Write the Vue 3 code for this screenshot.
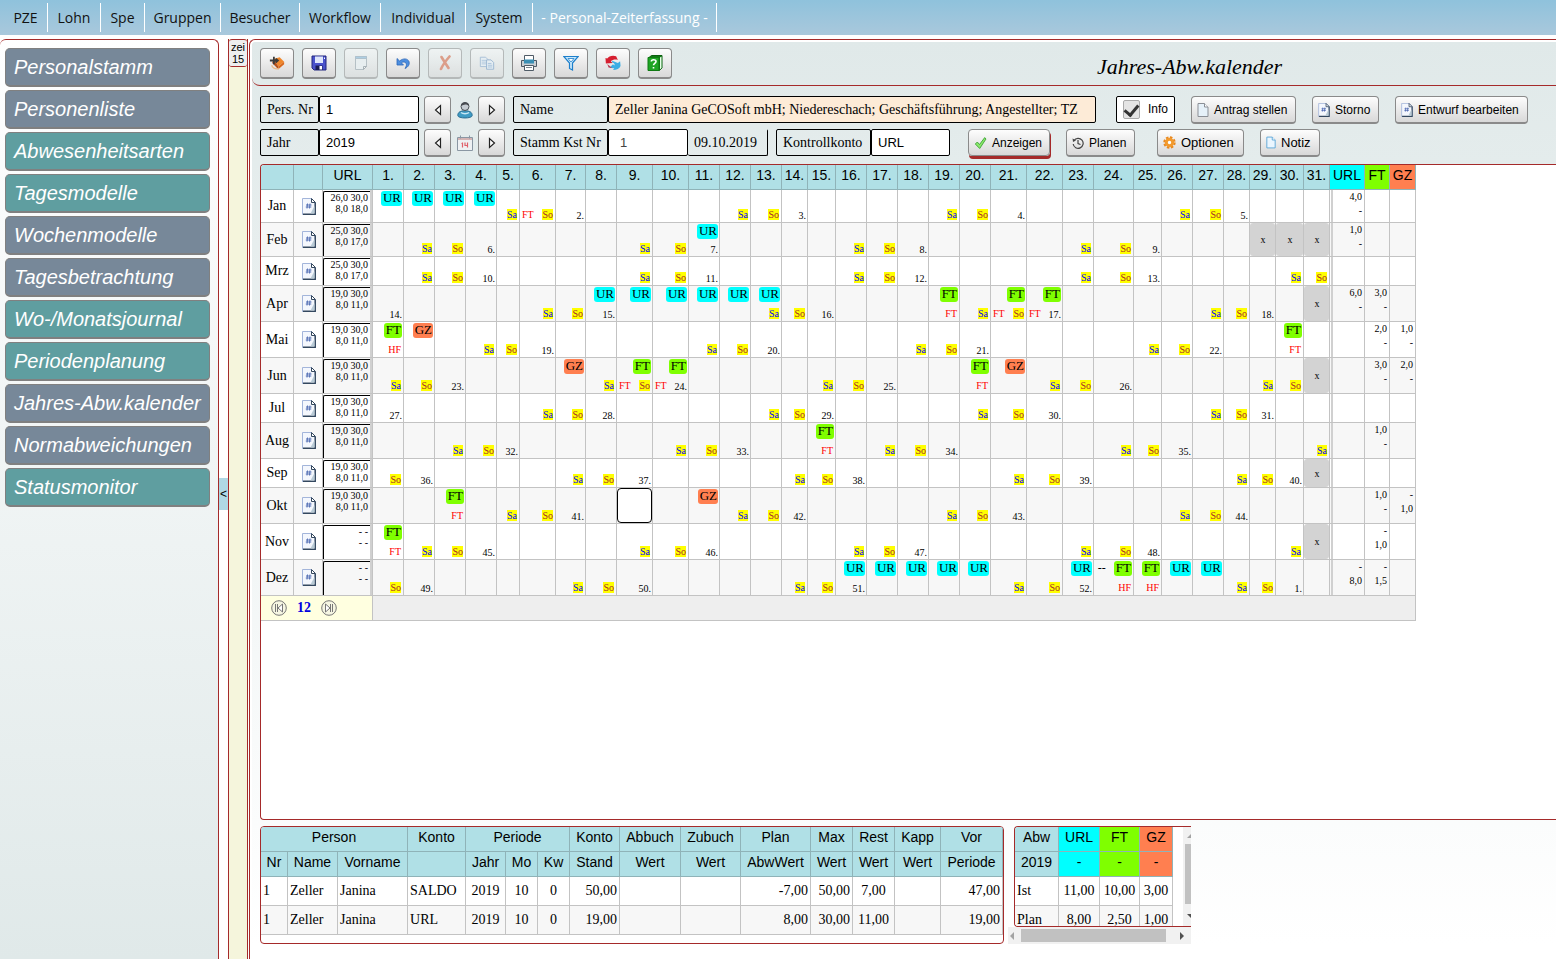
<script setup>
import { ref } from 'vue'

const navItems = ['PZE', 'Lohn', 'Spe', 'Gruppen', 'Besucher', 'Workflow', 'Individual', 'System', '- Personal-Zeiterfassung -']

const sideItems = [
  { label: 'Personalstamm', tone: 'slate' },
  { label: 'Personenliste', tone: 'slate' },
  { label: 'Abwesenheitsarten', tone: 'teal' },
  { label: 'Tagesmodelle', tone: 'teal' },
  { label: 'Wochenmodelle', tone: 'slate' },
  { label: 'Tagesbetrachtung', tone: 'slate' },
  { label: 'Wo-/Monatsjournal', tone: 'teal' },
  { label: 'Periodenplanung', tone: 'teal' },
  { label: 'Jahres-Abw.kalender', tone: 'slate' },
  { label: 'Normabweichungen', tone: 'slate' },
  { label: 'Statusmonitor', tone: 'teal' }
]

const tools = [
  { icon: 'exit', label: 'Beenden' },
  { icon: 'save', label: 'Speichern' },
  { icon: 'new', label: 'Neu', off: true },
  { icon: 'undo', label: 'Rückgängig' },
  { icon: 'delete', label: 'Löschen', off: true },
  { icon: 'copy', label: 'Kopieren', off: true },
  { icon: 'print', label: 'Drucken' },
  { icon: 'filter', label: 'Filter' },
  { icon: 'refresh', label: 'Aktualisieren' },
  { icon: 'help', label: 'Hilfe' }
]

const persNr = ref('1')
const jahr = ref('2019')
const kst = ref('1')
const konto = ref('URL')
const info = ref(true)

const year = 2019
const colWidths = [33, 29, 50, 31, 31, 31, 31, 23, 36, 30, 31, 36, 36, 31, 31, 31, 26, 28, 31, 31, 31, 31, 31, 36, 36, 31, 40, 28, 31, 31, 26, 26, 28, 26, 35, 25, 26]

// b: absence badges per day, n: holiday notes per day, s: yearly sums
const monthData = [
  { name: 'Jan', h: 33, acc: ['26,0 30,0', '8,0 18,0'], b: { 1: 'UR', 2: 'UR', 3: 'UR', 4: 'UR' }, n: { 6: 'FT' }, s: [['4,0', '-'], [], []] },
  { name: 'Feb', h: 34, acc: ['25,0 30,0', '8,0 17,0'], b: { 11: 'UR' }, n: {}, s: [['1,0', '-'], [], []] },
  { name: 'Mrz', h: 29, acc: ['25,0 30,0', '8,0 17,0'], b: {}, n: {}, s: [[], [], []] },
  { name: 'Apr', h: 36, acc: ['19,0 30,0', '8,0 11,0'], b: { 8: 'UR', 9: 'UR', 10: 'UR', 11: 'UR', 12: 'UR', 13: 'UR', 19: 'FT', 21: 'FT', 22: 'FT' }, n: { 19: 'FT', 21: 'FT', 22: 'FT' }, s: [['6,0', '-'], ['3,0', '-'], []] },
  { name: 'Mai', h: 36, acc: ['19,0 30,0', '8,0 11,0'], b: { 1: 'FT', 2: 'GZ', 30: 'FT' }, n: { 1: 'HF', 30: 'FT' }, s: [[], ['2,0', '-'], ['1,0', '-']] },
  { name: 'Jun', h: 36, acc: ['19,0 30,0', '8,0 11,0'], b: { 7: 'GZ', 9: 'FT', 10: 'FT', 20: 'FT', 21: 'GZ' }, n: { 9: 'FT', 10: 'FT', 20: 'FT' }, s: [[], ['3,0', '-'], ['2,0', '-']] },
  { name: 'Jul', h: 29, acc: ['19,0 30,0', '8,0 11,0'], b: {}, n: {}, s: [[], [], []] },
  { name: 'Aug', h: 36, acc: ['19,0 30,0', '8,0 11,0'], b: { 15: 'FT' }, n: { 15: 'FT' }, s: [[], ['1,0', '-'], []] },
  { name: 'Sep', h: 29, acc: ['19,0 30,0', '8,0 11,0'], b: {}, n: {}, s: [[], [], []] },
  { name: 'Okt', h: 36, acc: ['19,0 30,0', '8,0 11,0'], b: { 3: 'FT', 11: 'GZ' }, n: { 3: 'FT' }, s: [[], ['1,0', '-'], ['-', '1,0']] },
  { name: 'Nov', h: 36, acc: ['- -', '- -'], b: { 1: 'FT' }, n: { 1: 'FT' }, s: [[], ['-', '1,0'], []] },
  { name: 'Dez', h: 36, acc: ['- -', '- -'], b: { 16: 'UR', 17: 'UR', 18: 'UR', 19: 'UR', 20: 'UR', 23: 'UR', 24: 'FT', 25: 'FT', 26: 'UR', 27: 'UR' }, n: { 24: 'HF', 25: 'HF' }, pre: { 24: '--' }, s: [['-', '8,0'], ['-', '1,5'], []] }
]

function isoWeek(date) {
  const d = new Date(Date.UTC(date.getFullYear(), date.getMonth(), date.getDate()))
  d.setUTCDate(d.getUTCDate() + 4 - (d.getUTCDay() || 7))
  const start = new Date(Date.UTC(d.getUTCFullYear(), 0, 1))
  return Math.ceil(((d - start) / 86400000 + 1) / 7)
}

const months = monthData.map((m, index) => {
  const length = new Date(year, index + 1, 0).getDate()
  const days = []
  for (let day = 1; day <= 31; day++) {
    if (day > length) {
      days.push({ day, out: true })
      continue
    }
    const date = new Date(year, index, day)
    const wd = date.getDay()
    days.push({
      day,
      badge: m.b[day],
      note: m.n[day],
      pre: m.pre?.[day],
      mark: wd === 6 ? 'Sa' : wd === 0 ? 'So' : '',
      week: wd === 1 ? isoWeek(date) + '.' : '',
      selected: index === 9 && day === 9
    })
  }
  return { ...m, days }
})

const kontoCols = [27, 50, 70, 58, 40, 32, 32, 50, 61, 60, 70, 42, 42, 46, 62]
const kontoHead = ['Nr', 'Name', 'Vorname', '', 'Jahr', 'Mo', 'Kw', 'Stand', 'Wert', 'Wert', 'AbwWert', 'Wert', 'Wert', 'Wert', 'Periode']
const kontoAlign = ['l', 'l', 'l', 'l', 'c', 'c', 'c', 'r', 'r', 'r', 'r', 'r', 'c', 'r', 'r']
const kontoRows = [
  ['1', 'Zeller', 'Janina', 'SALDO', '2019', '10', '0', '50,00', '', '', '-7,00', '50,00', '7,00', '', '47,00'],
  ['1', 'Zeller', 'Janina', 'URL', '2019', '10', '0', '19,00', '', '', '8,00', '30,00', '11,00', '', '19,00']
]
</script>

<template>
  <div class="page">
    <svg class="defs" aria-hidden="true">
      <symbol id="i-doc" viewBox="0 0 14 17">
        <path d="M.5 .5h9l4 4v12H.5z" fill="#f4f7fd" stroke="#a3b5da" />
        <path d="M1 16.200h12.200V5" fill="none" stroke="#34485f" stroke-width="1.500" />
        <path d="M9.500 .5v4h4z" fill="#fff" stroke="#34485f" />
        <path d="M8.500 15.500 12.500 8v7.500z" fill="#b9cbd6" />
        <path d="M5.500 5.500 5 10.500M8 5.500 7.500 10.500M4 7h5.500M3.800 9h5.500" stroke="#4a66b0" stroke-width=".9" fill="none" />
      </symbol>
      <symbol id="i-page" viewBox="0 0 12 14">
        <path d="M1 .5h6.500L11 4v9.500H1z" fill="#e6f1f9" stroke="#8b8f96" />
        <path d="M7.500 .5V4H11" fill="#fff" stroke="#8b8f96" />
      </symbol>
      <symbol id="i-exit" viewBox="0 0 18 18">
        <path d="M5 4.500 12 2.500l5 5-6.500 5.500z" fill="#f0872b" />
        <path d="M5 4.500 10.500 13v3L3.500 9z" fill="#b4501a" />
        <path d="M10.500 13 17 7.500v3L10.500 16z" fill="#d9681c" />
        <path d="M3 11.500c1 3 4 4.500 8 4" fill="none" stroke="#e8b98a" stroke-width="1.500" />
        <path d="M1 6.200h8M5.500 2v8.500M7.500 4 10 6.200 7.500 8.500" fill="none" stroke="#3b3b3b" stroke-width="2" />
      </symbol>
      <symbol id="i-save" viewBox="0 0 16 16">
        <path d="M1 1h14v14H3l-2-2z" fill="#4a52cc" stroke="#23277f" />
        <path d="M4 1.500h8V8H4z" fill="#dfe6fb" />
        <path d="M4.500 10.500h7V15h-7z" fill="#191c55" />
        <path d="M8.500 11h2.500v3.500H8.500z" fill="#fff" />
        <path d="M13 2.500h1v1.500h-1z" fill="#fff" />
      </symbol>
      <symbol id="i-new" viewBox="0 0 16 16">
        <path d="M2.500 1.500h11v10l-3 3h-8z" fill="#eef3f6" stroke="#8b98a2" />
        <path d="M2.500 1.500h11v2h-11z" fill="#7ab4dd" stroke="#7f9bb2" />
        <path d="M13.500 11.500h-3v3z" fill="#fff" stroke="#6e7a84" />
      </symbol>
      <symbol id="i-undo" viewBox="0 0 16 16">
        <path d="M2 3.500v6.500h6.500L6.300 7.800c1.800-1.300 3.800-1 4.700.3.900 1.600.4 3.400-1 5.400 3.400-1.500 4.900-4.300 4-6.900C12.600 3.300 8.300 3 4.600 6z" fill="#4d8fe0" stroke="#2b64b8" stroke-width=".8" />
      </symbol>
      <symbol id="i-delete" viewBox="0 0 16 16">
        <path d="M4.500 2c2 3.500 4.500 7 7 11M12.500 1.500C9 5.500 6 9.500 4 14" fill="none" stroke="#d8552c" stroke-width="2.600" stroke-linecap="round" />
      </symbol>
      <symbol id="i-copy" viewBox="0 0 18 16">
        <path d="M1.500 1.500h6l2.500 2.500v8H1.500z" fill="#eaf2fb" stroke="#6a93c4" />
        <path d="M3 5h5M3 7h5M3 9h5" stroke="#7da6d4" />
        <path d="M8.500 4.500h5l3 3v7.500h-8z" fill="#eaf2fb" stroke="#4f7fb8" />
        <path d="M10 8.500h4M10 10.500h5M10 12.500h5" stroke="#6b98cc" />
      </symbol>
      <symbol id="i-print" viewBox="0 0 16 16">
        <path d="M3.500 5V.5h9V5" fill="#fff" stroke="#4f5b66" />
        <path d="M.5 5.500h15v6H.5z" fill="#c9cfd4" stroke="#4f5b66" />
        <path d="M3 4.500h10v4H3z" fill="#3a8fb4" />
        <path d="M3.500 10.500h9v5h-9z" fill="#fff" stroke="#4f5b66" />
        <path d="M5 12.500h6" stroke="#7d8790" />
      </symbol>
      <symbol id="i-filter" viewBox="0 0 16 16">
        <path d="M.8 1.500h14.400L9.500 8v7l-3-1.500V8z" fill="#c9e8fb" stroke="#1d7fcb" stroke-width="1.200" />
        <path d="M5 3.500h6L8 7z" fill="#fff" stroke="#1d7fcb" stroke-width=".8" />
      </symbol>
      <symbol id="i-refresh" viewBox="0 0 18 18">
        <path d="M8 6.500 14.500 9l2.500-2 .5 5.500c-1 3-4.500 4.500-8.500 4.500l1.500-2.200-5.500-.5L9 10.500l1.500 1.300c1-.8 0-2.800-2.500-3.300z" fill="#3aaee4" />
        <path d="M14.500 5.500 12.500 1.500C8.500 0 4 1.500 2.500 4L.5 3.500 1 9.500l7.500-.5-2-2c2-1.800 5-2.300 8-1.500z" fill="#d61f30" />
        <path d="M2.500 10 8 14.500l-4-.5z" fill="#b93a54" />
      </symbol>
      <symbol id="i-help" viewBox="0 0 16 16">
        <path d="M2 2.500 4.500 .5h10.500V13l-2.500 2.500z" fill="#0e7a12" stroke="#0b5e0e" />
        <path d="M13 2.500 14.500 1.500V13L13 14.500z" fill="#e8ffe8" />
        <path d="M1 2.500h11v13H1z" fill="#1fa524" stroke="#0f7a13" />
        <path d="M4.300 6.500C4.300 4.300 9 4 9 6.500c0 2-2.500 1.800-2.500 3.800M6.500 12v1.600" fill="none" stroke="#fff" stroke-width="1.600" />
      </symbol>
    </svg>

    <nav class="topnav">
      <a v-for="(item, i) in navItems" :key="item" href="#" :class="{ current: i === 8 }">{{ item }}</a>
    </nav>

    <div class="body">
      <aside class="sidebar">
        <button v-for="item in sideItems" :key="item.label" type="button" :class="item.tone">{{ item.label }}</button>
      </aside>
      <div class="handle"><button type="button">&lt;</button></div>
      <div class="strip"><button type="button">zei<br>15</button></div>

      <main class="main">
        <header class="toolbar">
          <button v-for="t in tools" :key="t.icon" type="button" class="btn tool" :disabled="t.off" :aria-label="t.label">
            <svg width="16" height="16" aria-hidden="true"><use :href="'#i-' + t.icon" /></svg>
          </button>
          <h1>Jahres-Abw.kalender</h1>
        </header>

        <form class="filters" @submit.prevent>
          <div class="line">
            <label class="cap short" for="pers">Pers. Nr</label>
            <input id="pers" v-model="persNr" class="field w100" type="text">
            <div class="stepper">
              <button type="button" class="btn" aria-label="Vorherige Person"><svg width="8" height="12"><path d="M6.500 1.500v9L1.500 6z" fill="#fff" stroke="#222" stroke-width="1.200" /></svg></button>
              <svg width="16" height="18" viewBox="0 0 16 18">
                <path d="M.8 14.500C.8 11 3.500 9.800 8 9.800s7.200 1.200 7.200 4.700c0 3.300-14.400 3.300-14.400 0z" fill="#3f9cc4" stroke="#2b6f94" />
                <path d="M4 11.500c2 1.500 6 1.500 8 0" stroke="#c7e7f4" stroke-width="1.500" fill="none" />
                <circle cx="8" cy="5.500" r="4" fill="#c5ccd2" stroke="#4b5157" />
                <path d="M4 5c0-5 8-5 8 0-2-2-5-2-8 0z" fill="#474b50" />
              </svg>
              <button type="button" class="btn" aria-label="Nächste Person"><svg width="8" height="12"><path d="M1.500 1.500v9L6.500 6z" fill="#fff" stroke="#222" stroke-width="1.200" /></svg></button>
            </div>
            <span class="cap long">Name</span>
            <output class="person">Zeller Janina GeCOSoft mbH; Niedereschach; Geschäftsführung; Angestellter; TZ</output>
            <div class="actions first">
              <label class="check"><input v-model="info" type="checkbox"><span>Info</span></label>
              <button type="button" class="btn text w105"><svg width="12" height="14"><use href="#i-page" /></svg>Antrag stellen</button>
              <button type="button" class="btn text w67"><svg width="12" height="14"><use href="#i-doc" /></svg>Storno</button>
              <button type="button" class="btn text w133"><svg width="12" height="14"><use href="#i-doc" /></svg>Entwurf bearbeiten</button>
            </div>
          </div>
          <div class="line">
            <label class="cap short" for="jahr">Jahr</label>
            <input id="jahr" v-model="jahr" class="field w100" type="text">
            <div class="stepper">
              <button type="button" class="btn" aria-label="Vorheriges Jahr"><svg width="8" height="12"><path d="M6.500 1.500v9L1.500 6z" fill="#fff" stroke="#222" stroke-width="1.200" /></svg></button>
              <svg width="16" height="18" viewBox="0 0 16 18">
                <path d="M.5 3.500h15v13H.5z" fill="#eef1f3" stroke="#8a97a3" />
                <path d="M1 4h14v2H1z" fill="#d4b4b4" />
                <path d="M3.500 1.500v3M12.500 1.500v3" stroke="#8a97a3" />
                <path d="M5.500 8.500v5M4.500 9.500h1M8 8.500v3h3M10.500 8.500v5" fill="none" stroke="#e0606a" stroke-width="1.200" />
              </svg>
              <button type="button" class="btn" aria-label="Nächstes Jahr"><svg width="8" height="12"><path d="M1.500 1.500v9L6.500 6z" fill="#fff" stroke="#222" stroke-width="1.200" /></svg></button>
            </div>
            <label class="cap long" for="kst">Stamm Kst Nr</label>
            <input id="kst" v-model="kst" class="field w80 dim" type="text">
            <span class="date">09.10.2019</span>
            <label class="cap long konto" for="konto">Kontrollkonto</label>
            <input id="konto" v-model="konto" class="field w79" type="text">
            <div class="actions second">
              <button type="submit" class="btn text primary w82"><svg width="13" height="12" viewBox="0 0 12 12"><path d="M.8 7 2.800 5 5 7.500 10.200 .6 11.500 2 5.200 11.500z" fill="#8be86a" stroke="#2f9a2a" stroke-width=".8" /></svg>Anzeigen</button>
              <button type="button" class="btn text w69"><svg width="12" height="12"><path d="M2 3.500A5 5 0 1 1 1.200 7" fill="none" stroke="#444" stroke-width="1.200" /><path d="M.6 1.500 1 5l3-1.500z" fill="#444" /><path d="M6 3v3.500l2.500 1" fill="none" stroke="#444" stroke-width="1.200" /></svg>Planen</button>
              <button type="button" class="btn text big wide w87"><svg width="13" height="13" viewBox="0 0 13 13"><circle cx="6.500" cy="6.500" r="5" fill="none" stroke="#e8871e" stroke-width="2.400" stroke-dasharray="2.400 1.500" /><circle cx="6.500" cy="6.500" r="3.200" fill="#fff" stroke="#f29a2e" stroke-width="3" /></svg>Optionen</button>
              <button type="button" class="btn text big w60"><svg width="10" height="13" viewBox="0 0 12 14"><path d="M1 .5h6.500L11 4v9.500H1z" fill="#eaf6ff" stroke="#4e9fd4" /><path d="M7.500 .5V4H11" fill="#fff" stroke="#4e9fd4" /></svg>Notiz</button>
            </div>
          </div>
        </form>

        <section class="calendar">
          <table class="grid cal">
            <colgroup><col v-for="(w, i) in colWidths" :key="i" :style="{ width: w + 'px' }"></colgroup>
            <thead>
              <tr>
                <th></th>
                <th></th>
                <th>URL</th>
                <th v-for="d in 31" :key="d">{{ d }}.</th>
                <th class="bg-ur">URL</th>
                <th class="bg-ft">FT</th>
                <th class="bg-gz">GZ</th>
              </tr>
            </thead>
            <tbody>
              <tr v-for="m in months" :key="m.name" :style="{ '--row': m.h + 'px' }">
                <th scope="row" class="month">{{ m.name }}</th>
                <td class="doc"><svg width="14" height="17" role="img" aria-label="Details"><use href="#i-doc" /></svg></td>
                <td><div class="balance"><div class="account"><div v-for="(a, i) in m.acc" :key="i">{{ a }}</div></div></div></td>
                <td v-for="d in m.days" :key="d.day">
                  <div v-if="d.out" class="cell out">x</div>
                  <div v-else-if="d.selected" class="cell selected"></div>
                  <div v-else class="cell">
                    <div v-if="d.badge" class="top"><span v-if="d.pre" class="pre">{{ d.pre }}</span><span class="badge" :class="'bg-' + d.badge.toLowerCase()">{{ d.badge }}</span></div>
                    <div class="bottom">
                      <span v-if="d.note" class="note">{{ d.note }}</span>
                      <span v-if="d.mark" class="mark" :class="d.mark.toLowerCase()">{{ d.mark }}</span>
                      <span v-if="d.week" class="week">{{ d.week }}</span>
                    </div>
                  </div>
                </td>
                <td v-for="(s, i) in m.s" :key="'s' + i"><div class="sum" :class="{ barred: i === 0 }"><div v-for="(v, k) in s" :key="k">{{ v }}</div></div></td>
              </tr>
            </tbody>
            <tfoot>
              <tr>
                <td colspan="3" class="pager">
                  <div>
                    <button type="button" aria-label="Erste Seite"><svg width="16" height="16"><circle cx="8" cy="8" r="7.300" fill="#f6f6e2" stroke="#777" /><path d="M4.500 4v8M6.500 4v8M11.500 4v8L7 8z" fill="#fff" stroke="#777" /></svg></button>
                    <b>12</b>
                    <button type="button" aria-label="Letzte Seite"><svg width="16" height="16"><circle cx="8" cy="8" r="7.300" fill="#f6f6e2" stroke="#777" /><path d="M11.500 4v8M9.500 4v8M4.500 4v8L9 8z" fill="#fff" stroke="#777" /></svg></button>
                  </div>
                </td>
                <td colspan="34" class="rest"></td>
              </tr>
            </tfoot>
          </table>
        </section>

        <section class="lower">
          <div class="konten">
            <table class="grid list">
              <colgroup><col v-for="(w, i) in kontoCols" :key="i" :style="{ width: w + 'px' }"></colgroup>
              <thead>
                <tr>
                  <th colspan="3">Person</th>
                  <th>Konto</th>
                  <th colspan="3">Periode</th>
                  <th>Konto</th>
                  <th>Abbuch</th>
                  <th>Zubuch</th>
                  <th>Plan</th>
                  <th>Max</th>
                  <th>Rest</th>
                  <th>Kapp</th>
                  <th>Vor</th>
                </tr>
                <tr><th v-for="(h, i) in kontoHead" :key="i">{{ h }}</th></tr>
              </thead>
              <tbody>
                <tr v-for="(row, r) in kontoRows" :key="r">
                  <td v-for="(c, i) in row" :key="i" :class="kontoAlign[i]">{{ c }}</td>
                </tr>
              </tbody>
            </table>
          </div>
          <div class="totals">
            <div class="view">
              <div class="clip">
                <table class="grid list abw">
                  <thead>
                    <tr><th>Abw</th><th class="bg-ur">URL</th><th class="bg-ft">FT</th><th class="bg-gz">GZ</th></tr>
                    <tr><th>2019</th><th class="bg-ur">-</th><th class="bg-ft">-</th><th class="bg-gz">-</th></tr>
                  </thead>
                  <tbody>
                    <tr><td class="l">Ist</td><td class="c">11,00</td><td class="c">10,00</td><td class="c">3,00</td></tr>
                    <tr><td class="l">Plan</td><td class="c">8,00</td><td class="c">2,50</td><td class="c">1,00</td></tr>
                  </tbody>
                </table>
              </div>
              <div class="vbar"><i class="up"></i><i class="thumb"></i><i class="down"></i></div>
            </div>
            <div class="hbar"><i class="left"></i><i class="thumb"></i><i class="right"></i></div>
          </div>
        </section>
      </main>
    </div>
  </div>
</template>

<style>
body { margin: 0; overflow: hidden; }
</style>

<style scoped>
* { box-sizing: border-box; }
.page { display: flex; flex-direction: column; height: 100vh; background: #fff; color: #000; font-family: "Liberation Serif", "Times New Roman", serif; font-size: 14px; }
.defs { position: absolute; width: 0; height: 0; }
button { margin: 0; padding: 0; font-family: "Liberation Sans", Arial, sans-serif; color: #000; }

.topnav { display: grid; grid-template-columns: 48px 53px 44px 76px 79px 81px 85px 67px 184px; flex: none; height: 35px; padding: 3px 0; background: linear-gradient(#8fc2dc, #a9c8dc); }
.topnav a { display: flex; align-items: center; justify-content: center; border-right: 1px solid #fff; color: #111; font: 14px "Open Sans", "Noto Sans", sans-serif; text-decoration: none; white-space: nowrap; }
.topnav a:first-child { padding-left: 4px; }
.topnav a.current { color: #fff; }

.body { display: flex; flex: 1; min-height: 0; padding-top: 4px; }
.sidebar { display: flex; flex-direction: column; gap: 3px; flex: none; width: 219px; padding: 8px 8px 0 5px; border: 1px solid #a52a2a; border-width: 1px 1px 0 0; border-radius: 6px 6px 0 0; background: linear-gradient(#fff, #e0e9e9); }
.sidebar button { height: 39px; padding-left: 8px; border: 1px solid #808080; border-radius: 5px; border-bottom-width: 2px; color: #fff; font-size: 20px; font-style: italic; text-align: left; white-space: nowrap; }
.slate { background: #778899; }
.teal { background: #5f9ea0; }
.handle { display: flex; align-items: center; flex: none; width: 9px; padding-bottom: 10px; }
.handle button { width: 9px; height: 32px; border: 0; background: #b0d8e4; font-size: 12px; }
.strip { flex: none; width: 20px; border: 1px solid #a52a2a; border-width: 0 1px; background: #f5f5dc; }
.strip button { display: block; width: 18px; height: 28px; border: 1px solid #a52a2a; border-width: 1px 0; border-radius: 3px; background: #eee; font-size: 11px; line-height: 12px; }

.main { display: flex; flex-direction: column; flex: 1; min-width: 0; margin-left: 1px; padding: 2px 0 15px 2px; border: 1px solid #a52a2a; border-width: 1px 0 0 1px; border-radius: 6px 0 0 0; background: linear-gradient(#e0e9e9, #fff) content-box; }
.toolbar { display: flex; gap: 8px; flex: none; height: 44px; padding: 6px 0 0 8px; border: 1px solid #a52a2a; border-width: 0 0 1px; border-radius: 0 0 0 8px; }
.toolbar h1 { flex: 1; margin: 0; padding-left: 417px; font-size: 22px; font-style: italic; font-weight: 400; line-height: 37px; white-space: nowrap; }
.btn { display: flex; align-items: center; justify-content: center; flex: none; width: 27px; height: 28px; border: 1px solid #8a8a8a; border-bottom-width: 2px; border-radius: 4px; background: linear-gradient(#fdfdfd, #d8d8d8); white-space: nowrap; }
.tool { width: 34px; height: 31px; }
.tool:disabled { opacity: .5; }

.filters { display: flex; flex-direction: column; gap: 6px; flex: none; padding: 10px 0 8px 8px; }
.line { display: flex; height: 27px; }
.cap, .field, .person, .check, .date { flex: none; height: 27px; border: 1px solid #000; border-radius: 2px; line-height: 25px; white-space: nowrap; }
.cap { padding-left: 6px; }
.short { width: 59px; }
.long { width: 95px; }
.konto { margin-left: 8px; }
.field { padding: 0 6px; background: #fff; color: #000; font-family: "Liberation Sans", Arial, sans-serif; font-size: 13px; }
.dim { padding-left: 11px; color: #444; }
.w100 { width: 100px; }
.w80 { width: 80px; }
.w79 { width: 79px; }
.date { width: 80px; padding-left: 6px; border-left: 0; border-top-color: transparent; }
.person { width: 488px; padding-left: 6px; overflow: hidden; background: #fdebd7; }
.stepper { display: flex; align-items: center; justify-content: space-between; flex: none; width: 81px; height: 28px; margin: 0 8px 0 5px; }
.actions { display: flex; gap: 16px; }
.first { margin-left: 20px; }
.second { margin-left: 18px; }
.check { display: flex; align-items: center; gap: 8px; width: 59px; padding-left: 6px; background: #fff; font-family: "Liberation Sans", Arial, sans-serif; font-size: 12px; line-height: 27px; }
.check input { display: grid; place-items: center; width: 17px; height: 19px; margin: 0; appearance: none; border: 1px solid #aaa; border-radius: 2px; background: #e4e4e4; }
.check input:checked::before { content: ""; width: 6px; height: 11px; border: solid #333; border-width: 0 3px 3px 0; rotate: 40deg; translate: 0 -1px; }
.text { justify-content: flex-start; gap: 5px; padding-left: 5px; font-size: 12px; }
.text svg { flex: none; }
.big { font-size: 13px; }
.wide { margin-left: 6px; }
.w105 { width: 105px; }
.w67 { width: 67px; }
.w133 { width: 133px; }
.w82 { width: 82px; }
.w69 { width: 69px; }
.w87 { width: 87px; }
.w60 { width: 60px; }
.primary { height: 27px; border-bottom-width: 1px; box-shadow: 1px 3px 0 #a52a2a; }

.calendar { flex: 1; min-height: 0; margin-left: 8px; overflow: hidden; border: 1px solid #a52a2a; border-right: 0; border-radius: 4px 0 0 4px; background: #fff; }
.grid { table-layout: fixed; border-collapse: separate; border-spacing: 0; }
.grid th, .grid td { padding: 0; border: 1px solid #c3c3c3; border-width: 0 1px 1px 0; font-weight: 400; }
.grid thead th { height: 25px; padding-bottom: 4px; border-color: #8fb3b8; background: #b0e0e6; font-family: "Liberation Sans", Arial, sans-serif; font-size: 14px; line-height: 16px; white-space: nowrap; }
.cal { width: 1155px; }
.cal tbody tr { height: var(--row); }
.grid tbody tr:nth-child(even) { background: #f7f7f7; }
.month { font-size: 14px; line-height: 16px; text-align: center; }
.cal .doc { padding-left: 8px; line-height: 0; }
.cell, .balance, .sum { height: calc(var(--row) - 1px); font-size: 10px; }
.balance { padding-top: 1px; border-right: 2px solid #d0d0d0; }
.account { height: 100%; padding-right: 2px; border: solid #000; border-width: 1px 0 0 1px; border-radius: 2px 0 0 0; line-height: 11px; text-align: right; }
.cell { display: flex; flex-direction: column; justify-content: space-between; padding: 1px 1px 1px 2px; line-height: 11px; }
.top { display: flex; align-items: center; justify-content: flex-end; gap: 8px; }
.pre { font-size: 12px; }
.badge { padding: 0 1px 1px 2px; border-radius: 3px; font-size: 13px; line-height: 14px; }
.grid .bg-ur { background: #00ffff; }
.grid .bg-ft { background: #7fff00; }
.grid .bg-gz { background: #ff7f50; }
.bottom { display: flex; align-items: flex-end; margin-top: auto; }
.note { margin-right: 1px; margin-bottom: 1px; color: #f00; }
.note:last-child { margin-left: auto; }
.mark { margin: 0 1px 1px auto; background: #ff0; }
.sa { color: #00f; }
.so { color: #a52a2a; }
.week { margin-left: auto; }
.out { align-items: center; justify-content: center; border-radius: 3px; background: #d3d3d3; }
.selected { border: 1px solid #000; border-radius: 4px; background: #fff; }
.sum { padding: 0 2px 0 0; line-height: 14px; text-align: right; }
.barred { margin-left: 1px; border-left: 2px solid #d0d0d0; }
.cal tfoot td { height: 25px; }
.cal .pager { background: #ffffe0; }
.pager div { display: flex; align-items: center; gap: 10px; padding-left: 10px; }
.pager button { width: 16px; height: 16px; border: 0; background: none; line-height: 0; }
.pager b { color: #0000e0; }
.cal .rest { background: #eee; }

.lower { display: flex; flex: none; margin: 6px 0 0 8px; }
.konten { flex: none; height: 118px; border: 1px solid #a52a2a; border-radius: 4px; background: #fff; overflow: hidden; }
.konten .list { width: 742px; }
.list tbody td { height: 29px; padding: 0 2px; }
.list .l { text-align: left; }
.list .c { text-align: center; }
.list .r { text-align: right; }
.totals { display: flex; flex-direction: column; flex: none; width: 183px; height: 118px; margin-left: 4px; overflow: hidden; }
.view { display: flex; height: 101px; margin-left: 6px; border: 1px solid #a52a2a; border-right: 0; border-radius: 4px 0 0 4px; background: #fff; overflow: hidden; }
.clip { flex: 1; overflow: hidden; }
.abw { width: 158px; }
.abw th:nth-child(1) { width: 44px; }
.abw th:nth-child(2) { width: 41px; }
.abw th:nth-child(3) { width: 40px; }
.abw th:nth-child(4) { width: 33px; }
.vbar { display: flex; flex-direction: column; align-items: flex-end; flex: none; width: 8px; padding: 7px 0; background: #f1f1f1; overflow: hidden; }
.vbar .thumb { width: 6px; height: 60px; margin: 6px 0 10px; background: #c1c1c1; }
.up, .down { width: 4px; border: solid transparent; border-width: 0 0 4px 4px; }
.up { border-bottom-color: #a3a3a3; }
.down { border-width: 4px 0 0 4px; border-top-color: #505050; }
.hbar { display: flex; align-items: center; flex: 1; padding: 0 7px 0 2px; background: #f1f1f1; }
.hbar .thumb { width: 145px; height: 13px; margin-left: 7px; background: #c1c1c1; }
.left, .right { border: 4px solid transparent; }
.left { border-width: 4px 4px 4px 0; border-right-color: #a3a3a3; }
.right { margin-left: auto; border-width: 4px 0 4px 4px; border-left-color: #505050; }
</style>
